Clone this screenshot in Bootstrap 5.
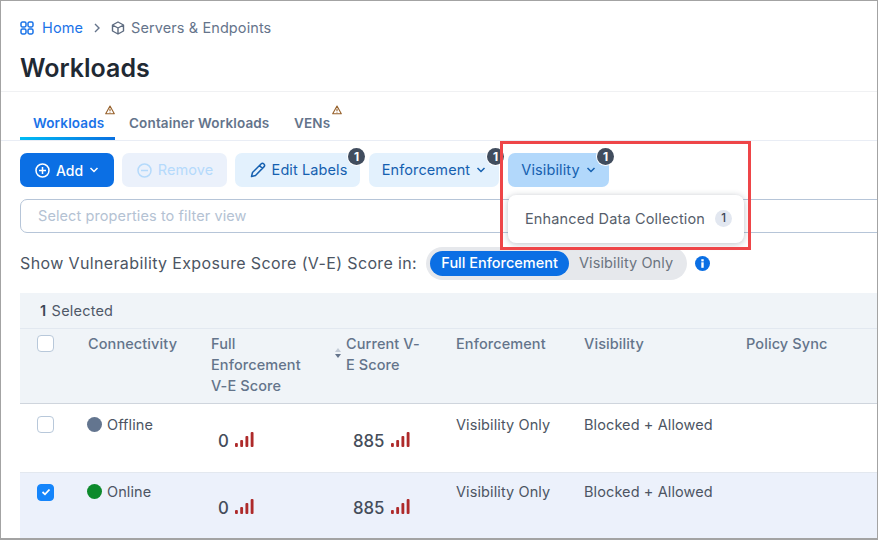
<!doctype html>
<html lang="en"><head><meta charset="utf-8"><title>Workloads</title>
<link rel="stylesheet" href="https://cdn.jsdelivr.net/npm/bootstrap@5.3.0/dist/css/bootstrap.min.css">
<style>
html,body{margin:0;height:100%;overflow:hidden;background:#fff}
body{font-family:Inter,"Liberation Sans",sans-serif;font-size:14.5px;letter-spacing:.1px;color:#4a5260}
.shot{position:relative;width:878px;height:540px;border:1px solid #a3a3a3;border-bottom-width:2px;overflow:hidden;background:#fff}
.crumbs{height:54px;padding:0 19px 1px;color:#65748b;font-size:14.5px;display:flex;align-items:center;gap:6px}
.crumbs a{color:#1a73e8;text-decoration:none;margin-left:2px}
.title{font-size:25px;font-weight:600;letter-spacing:0;color:#1f2933;margin:0;padding:0 19px;height:36px;line-height:26px}
.tabbar{border-top:1px solid #f0f1f3;border-bottom:1px solid #e9edf5;height:50px;padding:0 19px;display:flex;align-items:flex-end;margin-bottom:12px}
.tabx{position:relative;height:48px;padding:22px 0 0 13px;font-size:13.5px;letter-spacing:.15px;font-weight:600;color:#64748b;line-height:19px;white-space:nowrap}
.tabx.on{color:#1a73e8;width:95px;border-bottom:3px solid;border-image:linear-gradient(90deg,#00bdf5,#0a6fe0) 1}
.tabx.cw{width:158px;padding-left:14px}
.tabx.vn{padding-left:21px}
.warn{position:absolute;top:13px}
.bar{display:flex;gap:8px;padding:0 19px;height:34px;margin-bottom:12px}
.act{position:relative;height:34px;border:0;border-radius:7px;font-size:14.5px;letter-spacing:.1px;padding:0;display:inline-flex;align-items:center;justify-content:center;gap:6px;background:#e3f1fd;color:#1560b0}
.act.pri{width:94px;background:#0b6fe4;color:#fff;font-weight:500;letter-spacing:0;font-size:14px}
.act.off{width:105px;background:#ebf1fb;color:#b5dafb;padding-left:1px}
.act.lab{width:125px;padding-left:2px}
.act.enf{width:130px;margin-left:1px}
.act.vis{width:101px;background:#b2d8fb;margin-left:1px}
.num{position:absolute;top:-5px;right:-5px;width:17px;height:17px;border-radius:50%;background:#414d5e;color:#fff;font-size:12px;font-weight:700;line-height:17px;text-align:center;letter-spacing:0;box-shadow:0 0 0 1px #fff}
.filt{margin:0 -30px 14px 19px;height:34px;border:1px solid #b6c5d8;border-radius:7px;padding:0 17px;line-height:32px;color:#b4c2d3}
.scorebar{display:flex;align-items:center;height:33px;padding:0 19px;margin-bottom:13px;font-size:16px;letter-spacing:.37px;color:#4c5563}
.scorebar>span{padding-bottom:2px}
.sw{display:flex;flex:none;width:261px;height:33px;padding:4px;margin:0 8px 0 9px;background:#e6e8ec;border-radius:17px;font-size:14.5px;letter-spacing:.1px}
.sw span{height:25px;line-height:23px;text-align:center;border-radius:13px}
.sw .a{width:139px;background:#0b6fe4;color:#fff;font-weight:500;letter-spacing:0}
.sw .b{flex:1;color:#6b7480}
.grid{margin:0 0 0 19px;width:858px;table-layout:fixed;border-collapse:collapse;font-size:14.5px}
.grid th,.grid td{padding:0;background:transparent;border:0;box-shadow:none;vertical-align:top}
.grid .sel th{height:35px;background:#f0f4f8;font-weight:400;padding:2px 0 0 20px;vertical-align:middle;color:#4f5968;letter-spacing:.2px;border-bottom:1px solid #e2e8f0}
.sel b{font-weight:600;color:#3c4656;margin-right:1px}
.grid .hd th{height:75px;background:#f0f4f8;font-weight:500;color:#64748b;line-height:21px;padding-top:4px;border-bottom:1px solid #cfd5dd}
.grid td{height:69px;padding-top:11px;line-height:20px;color:#4c5563;border-bottom:1px solid #e3e8ef}
.grid tr.picked td{background:#ecf1fb;padding-top:9px}
.hd .tick{margin-top:2px}
.picked .tick{margin-top:2px}
.tick{width:17px;height:17px;margin:1px 0 0 17px;border:1px solid #b8c8da;border-radius:4px;background:#fff;display:block}
.tick.on{background:#1585fb;border-color:#1585fb;display:flex;align-items:center;justify-content:center}
.stat{display:flex;align-items:center;gap:5px}
.dot{width:15px;height:15px;border-radius:50%;display:block;margin-left:-1px}
.score{display:flex;align-items:flex-end;gap:6px;padding-left:7px;font-size:16.8px;letter-spacing:0;font-weight:500;color:#454d5a;height:41px;padding-bottom:5px;line-height:20px}
.score svg{margin-bottom:4px}
.sortx{position:absolute;left:-12px;top:18px}
.mark-box{position:absolute;left:499px;top:140px;width:251px;height:109px;border:3px solid #ee4548;pointer-events:none}
.pop{position:absolute;left:507px;top:194px;width:236px;height:48px;background:#fff;border-radius:8px;box-shadow:0 1px 6px rgba(40,50,70,.3);display:flex;align-items:center;padding:0 0 1px 17px;gap:10px;color:#565e6b;font-size:14.500px;letter-spacing:.15px}
.cnt{width:17px;height:17px;border-radius:50%;background:#e2e7f0;color:#3c4656;font-size:11.500px;font-weight:500;line-height:17px;text-align:center;letter-spacing:0}
</style></head><body>
<div class="shot">
  <nav class="crumbs">
    <svg width="14" height="14" viewBox="0 0 14 14" fill="none" stroke="#1a73e8" stroke-width="1.5"><rect x="1" y="1" width="5" height="5" rx="1.4"/><rect x="8" y="1" width="5" height="5" rx="1.4"/><rect x="1" y="8" width="5" height="5" rx="1.4"/><rect x="8" y="8" width="5" height="5" rx="1.4"/></svg>
    <a href="#">Home</a>
    <svg class="mx-1" width="8" height="12" viewBox="0 0 8 12" fill="none" stroke="#65748b" stroke-width="1.4"><path d="M2 2l4 4-4 4"/></svg>
    <svg width="14" height="14" viewBox="0 0 14 14" fill="none" stroke="#5d6b80" stroke-width="1.4" stroke-linejoin="round"><path d="M7 1l5.500 3v6L7 13 1.500 10V4zM1.500 4L7 7l5.500-3M7 7v6"/></svg>
    <span>Servers &amp; Endpoints</span>
  </nav>
  <h1 class="title">Workloads</h1>
  <div class="tabbar">
    <div class="tabx on">Workloads<svg class="warn" style="left:85px" width="10" height="10" viewBox="0 0 10 10" fill="none" stroke="#96602a" stroke-width="1.100" stroke-linejoin="round"><path d="M5 1L9.300 8.800H.7zM5 3.800v2.400M5 7.200v.6"/></svg></div>
    <div class="tabx cw">Container Workloads</div>
    <div class="tabx vn">VENs<svg class="warn" style="left:59px" width="10" height="10" viewBox="0 0 10 10" fill="none" stroke="#96602a" stroke-width="1.100" stroke-linejoin="round"><path d="M5 1L9.300 8.800H.7zM5 3.800v2.400M5 7.200v.6"/></svg></div>
  </div>
  <div class="bar">
    <button class="act pri"><svg width="15" height="15" viewBox="0 0 15 15" fill="none" stroke="#fff" stroke-width="1.500"><circle cx="7.500" cy="7.500" r="6.500"/><path d="M7.500 4v7M4 7.500h7"/></svg>Add<svg width="10" height="6" viewBox="0 0 10 6" fill="none" stroke="#fff" stroke-width="1.500"><path d="M1.500 1L5 4.500 8.500 1"/></svg></button>
    <button class="act off"><svg width="15" height="15" viewBox="0 0 15 15" fill="none" stroke="#b5dafb" stroke-width="1.500"><circle cx="7.500" cy="7.500" r="6.500"/><path d="M4 7.500h7"/></svg>Remove</button>
    <button class="act lab"><svg width="16" height="16" viewBox="0 0 16 16" fill="none" stroke="#1560b0" stroke-width="1.500" stroke-linejoin="round"><path d="M1.500 14.500l1-4L11 2a1.700 1.700 0 012.900 2.900L5.500 13.500zM9.500 3.500l3 3"/></svg>Edit Labels<span class="num">1</span></button>
    <button class="act enf">Enforcement<svg width="10" height="6" viewBox="0 0 10 6" fill="none" stroke="#1560b0" stroke-width="1.500"><path d="M1.500 1L5 4.500 8.500 1"/></svg><span class="num">1</span></button>
    <button class="act vis">Visibility<svg width="10" height="6" viewBox="0 0 10 6" fill="none" stroke="#1560b0" stroke-width="1.500"><path d="M1.500 1L5 4.500 8.500 1"/></svg><span class="num">1</span></button>
  </div>
  <div class="filt">Select properties to filter view</div>
  <div class="scorebar">
    <span class="text-nowrap">Show Vulnerability Exposure Score (V-E) Score in:</span>
    <div class="sw"><span class="a">Full Enforcement</span><span class="b">Visibility Only</span></div>
    <svg class="flex-shrink-0" width="15" height="15" viewBox="0 0 15 15"><circle cx="7.500" cy="7.500" r="7.500" fill="#0b6fe4"/><rect x="6.300" y="6.300" width="2.400" height="5.500" fill="#fff"/><rect x="6.300" y="3.200" width="2.400" height="2.200" fill="#fff"/></svg>
  </div>
  <table class="table grid">
    <colgroup><col style="width:68px"><col style="width:123px"><col style="width:135px"><col style="width:110px"><col style="width:128px"><col style="width:162px"><col></colgroup>
    <thead>
      <tr class="sel"><th colspan="7"><b>1</b> Selected</th></tr>
      <tr class="hd">
        <th><span class="tick"></span></th><th>Connectivity</th><th>Full<br>Enforcement<br>V-E Score</th>
        <th class="position-relative">Current V-<br>E Score<svg class="sortx" width="8" height="15" viewBox="0 0 8 15"><path d="M4 1l3 4H1z" fill="#c3cbd6"/><path d="M1 7h6l-3 4z" fill="#64748b"/></svg></th>
        <th>Enforcement</th><th>Visibility</th><th>Policy Sync</th>
      </tr>
    </thead>
    <tbody>
      <tr>
        <td><span class="tick"></span></td>
        <td><span class="stat"><i class="dot" style="background:#63758f"></i>Offline</span></td>
        <td><div class="score">0 <svg width="19" height="15" viewBox="0 0 20 15" preserveAspectRatio="none" fill="#ae2a2a"><rect x="0" y="11" width="3" height="4" rx="1"/><rect x="5.500" y="8" width="3" height="7" rx="1"/><rect x="11" y="4" width="3" height="11" rx="1"/><rect x="16.500" y="0" width="3" height="15" rx="1"/></svg></div></td>
        <td><div class="score">885 <svg width="19" height="15" viewBox="0 0 20 15" preserveAspectRatio="none" fill="#ae2a2a"><rect x="0" y="11" width="3" height="4" rx="1"/><rect x="5.500" y="8" width="3" height="7" rx="1"/><rect x="11" y="4" width="3" height="11" rx="1"/><rect x="16.500" y="0" width="3" height="15" rx="1"/></svg></div></td>
        <td>Visibility Only</td><td>Blocked + Allowed</td><td></td>
      </tr>
      <tr class="picked">
        <td><span class="tick on"><svg width="10" height="8" viewBox="0 0 10 8" fill="none" stroke="#fff" stroke-width="1.800"><path d="M1.500 4l2.500 2.300L8.500 1.500"/></svg></span></td>
        <td><span class="stat"><i class="dot" style="background:#0d8a2c"></i>Online</span></td>
        <td><div class="score">0 <svg width="19" height="15" viewBox="0 0 20 15" preserveAspectRatio="none" fill="#ae2a2a"><rect x="0" y="11" width="3" height="4" rx="1"/><rect x="5.500" y="8" width="3" height="7" rx="1"/><rect x="11" y="4" width="3" height="11" rx="1"/><rect x="16.500" y="0" width="3" height="15" rx="1"/></svg></div></td>
        <td><div class="score">885 <svg width="19" height="15" viewBox="0 0 20 15" preserveAspectRatio="none" fill="#ae2a2a"><rect x="0" y="11" width="3" height="4" rx="1"/><rect x="5.500" y="8" width="3" height="7" rx="1"/><rect x="11" y="4" width="3" height="11" rx="1"/><rect x="16.500" y="0" width="3" height="15" rx="1"/></svg></div></td>
        <td>Visibility Only</td><td>Blocked + Allowed</td><td></td>
      </tr>
    </tbody>
  </table>
  <div class="pop"><span>Enhanced Data Collection</span><span class="cnt">1</span></div>
  <div class="mark-box"></div>
</div>
</body></html>
